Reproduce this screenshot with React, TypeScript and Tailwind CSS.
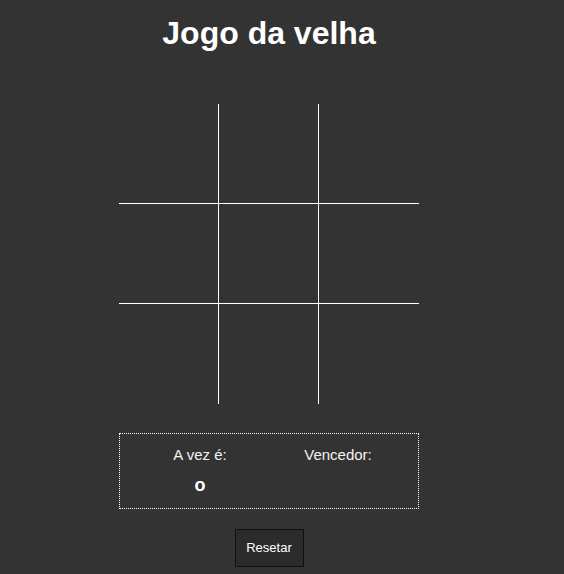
import React from "react";

export default function App() {
  const cells = [
    "h-[100px] border-r border-b border-white",
    "h-[100px] border-r border-b border-white",
    "h-[100px] border-b border-white",
    "h-[100px] border-r border-b border-white",
    "h-[100px] border-r border-b border-white",
    "h-[100px] border-b border-white",
    "h-[100px] border-r border-white",
    "h-[100px] border-r border-white",
    "h-[100px]",
  ];
  return (
    <div
      className="w-full min-h-[574px] bg-[#333333] text-white"
      style={{ fontFamily: '"Liberation Sans", Arial, sans-serif' }}
    >
      <div className="w-[538px] flex flex-col items-center pt-[15px]">
        <h1 className="text-[32px] font-bold leading-[37px] text-white">Jogo da velha</h1>
        <div className="mt-[52px] w-[300px] grid grid-cols-3">
          {cells.map((c, i) => (
            <div key={i} className={c} />
          ))}
        </div>
        <div className="mt-[29px] w-[300px] h-[76px] border border-dotted border-white flex pl-[30px] pt-[12px] gap-[38px]">
          <div className="w-[100px] flex flex-col items-center">
            <div className="text-[15px] leading-[17px] text-[#f2f2f2]">A vez é:</div>
            <div className="mt-[12px] text-[18px] leading-[21px] font-bold text-white">o</div>
          </div>
          <div className="w-[100px] flex flex-col items-center">
            <div className="text-[15px] leading-[17px] text-[#f2f2f2]">Vencedor:</div>
          </div>
        </div>
        <button className="mt-[20px] w-[69px] h-[38px] border border-[#111111] bg-[#2b2b2b] text-[13px] text-white">
          Resetar
        </button>
      </div>
    </div>
  );
}
